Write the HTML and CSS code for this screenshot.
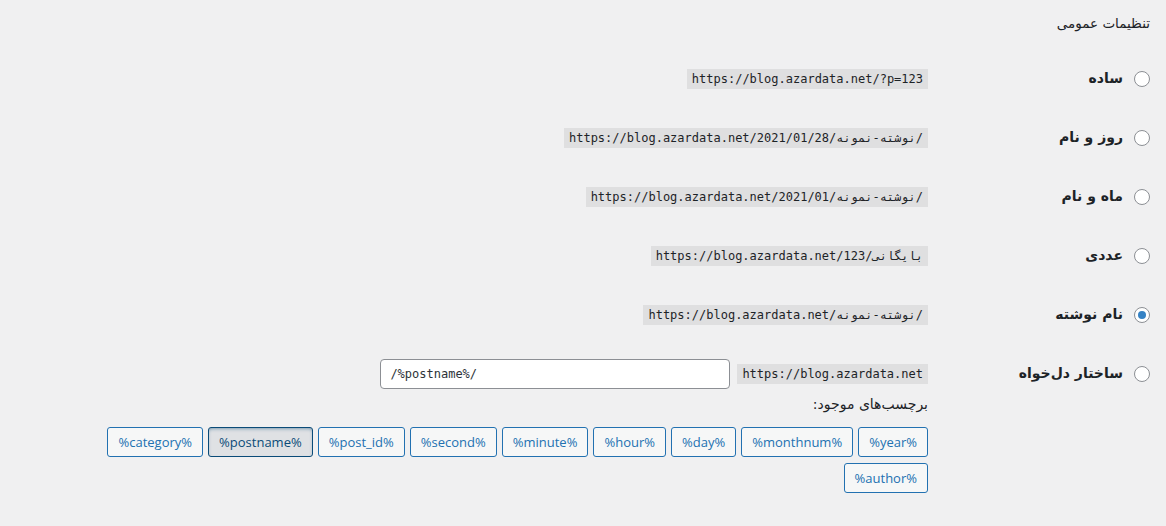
FILE: index.html
```html
<!DOCTYPE html>
<html lang="fa" dir="rtl">
<head>
<meta charset="utf-8">
<title>تنظیمات پیوندهای یکتا</title>
<link rel="stylesheet" href="styles.css">
</head>
<body>
<div class="wrap">
  <h2 class="title">تنظیمات عمومی</h2>
  <table class="form-table">
    <tr>
      <th><label class="opt"><input type="radio" class="radio" name="s"><span>ساده</span></label></th>
      <td><code>https://blog.azardata.net/?p=123</code></td>
    </tr>
    <tr>
      <th><label class="opt"><input type="radio" class="radio" name="s"><span>روز و نام</span></label></th>
      <td><code>https://blog.azardata.net/2021/01/28/نوشته-نمونه/</code></td>
    </tr>
    <tr>
      <th><label class="opt"><input type="radio" class="radio" name="s"><span>ماه و نام</span></label></th>
      <td><code>https://blog.azardata.net/2021/01/نوشته-نمونه/</code></td>
    </tr>
    <tr>
      <th><label class="opt"><input type="radio" class="radio" name="s"><span>عددی</span></label></th>
      <td><code>https://blog.azardata.net/بایگانی/123</code></td>
    </tr>
    <tr>
      <th><label class="opt"><input type="radio" class="radio" name="s" checked><span>نام نوشته</span></label></th>
      <td><code>https://blog.azardata.net/نوشته-نمونه/</code></td>
    </tr>
    <tr>
      <th><label class="opt"><input type="radio" class="radio" name="s"><span>ساختار دل‌خواه</span></label></th>
      <td>
        <div class="custom-line">
          <code>https://blog.azardata.net</code>
          <input type="text" class="struct" value="/%postname%/">
        </div>
        <p class="legend">برچسب‌های موجود:</p>
        <ul class="tag-list">
          <li><button class="tag">%year%</button></li>
          <li><button class="tag">%monthnum%</button></li>
          <li><button class="tag">%day%</button></li>
          <li><button class="tag">%hour%</button></li>
          <li><button class="tag">%minute%</button></li>
          <li><button class="tag">%second%</button></li>
          <li><button class="tag">%post_id%</button></li>
          <li><button class="tag tag-active">%postname%</button></li>
          <li><button class="tag">%category%</button></li>
          <li><button class="tag">%author%</button></li>
        </ul>
      </td>
    </tr>
  </table>
</div>
</body>
</html>
```

FILE: styles.css
```css
* { box-sizing: border-box; }

html, body {
  margin: 0;
  background: #f0f0f1;
}

body {
  color: #1d2327;
  font-family: "Open Sans", "DejaVu Sans", sans-serif;
  font-size: 13px;
}

.wrap {
  padding: 12px 16px 0 20px;
}

.title {
  margin: 0 0 15px;
  font-family: "DejaVu Sans", sans-serif;
  font-size: 13.5px;
  font-weight: 400;
  line-height: 22px;
}

.form-table {
  width: 100%;
  border-collapse: collapse;
}

.form-table th {
  width: 212px;
  padding: 20px 0 20px 10px;
  text-align: right;
  vertical-align: top;
  font-family: "DejaVu Sans", sans-serif;
  font-size: 14px;
  font-weight: 700;
  line-height: 19px;
}

.form-table td {
  padding: 15px 10px;
  vertical-align: middle;
  line-height: 1.3;
}

.opt {
  display: flex;
  align-items: center;
  gap: 11px;
  height: 19px;
}

.radio {
  appearance: none;
  -webkit-appearance: none;
  flex: none;
  width: 16px;
  height: 16px;
  margin: 0;
  border: 1px solid #8c8f94;
  border-radius: 50%;
  background: #fff;
  display: grid;
  place-items: center;
}

.radio:checked::before {
  content: "";
  width: 8px;
  height: 8px;
  border-radius: 50%;
  background: #3582c4;
}

code {
  display: inline-block;
  direction: ltr;
  font-family: "DejaVu Sans Mono", monospace;
  font-size: 12px;
  line-height: 15px;
  padding: 3px 5px 2px;
  background: rgba(0, 0, 0, 0.07);
  color: #1d2327;
}

.custom-line {
  display: flex;
  align-items: center;
  gap: 7px;
}

.struct {
  width: 350px;
  height: 30px;
  margin: 0;
  padding: 0 9px;
  direction: ltr;
  text-align: left;
  font-family: "DejaVu Sans Mono", monospace;
  font-size: 12px;
  color: #2c3338;
  background: #fff;
  border: 1px solid #8c8f94;
  border-radius: 4px;
  outline: none;
}

.legend {
  margin: 6px 0 0;
  font-family: "DejaVu Sans", sans-serif;
  font-size: 14px;
  line-height: 18px;
}

.tag-list {
  list-style: none;
  margin: 14px 0 0;
  padding: 0;
  display: flex;
  flex-wrap: wrap;
  gap: 6px 5px;
}

.tag {
  height: 30px;
  margin: 0;
  padding: 0 10px;
  font-family: "Open Sans", sans-serif;
  font-size: 13px;
  line-height: 28px;
  color: #2271b1;
  background: #f6f7f7;
  border: 1px solid #2271b1;
  border-radius: 3px;
  cursor: pointer;
}

.tag-active {
  background: #dfe1e4;
  border-color: #0a4b78;
  color: #0a4b78;
  box-shadow: inset 0 2px 5px -3px #0a4b78;
}
```
